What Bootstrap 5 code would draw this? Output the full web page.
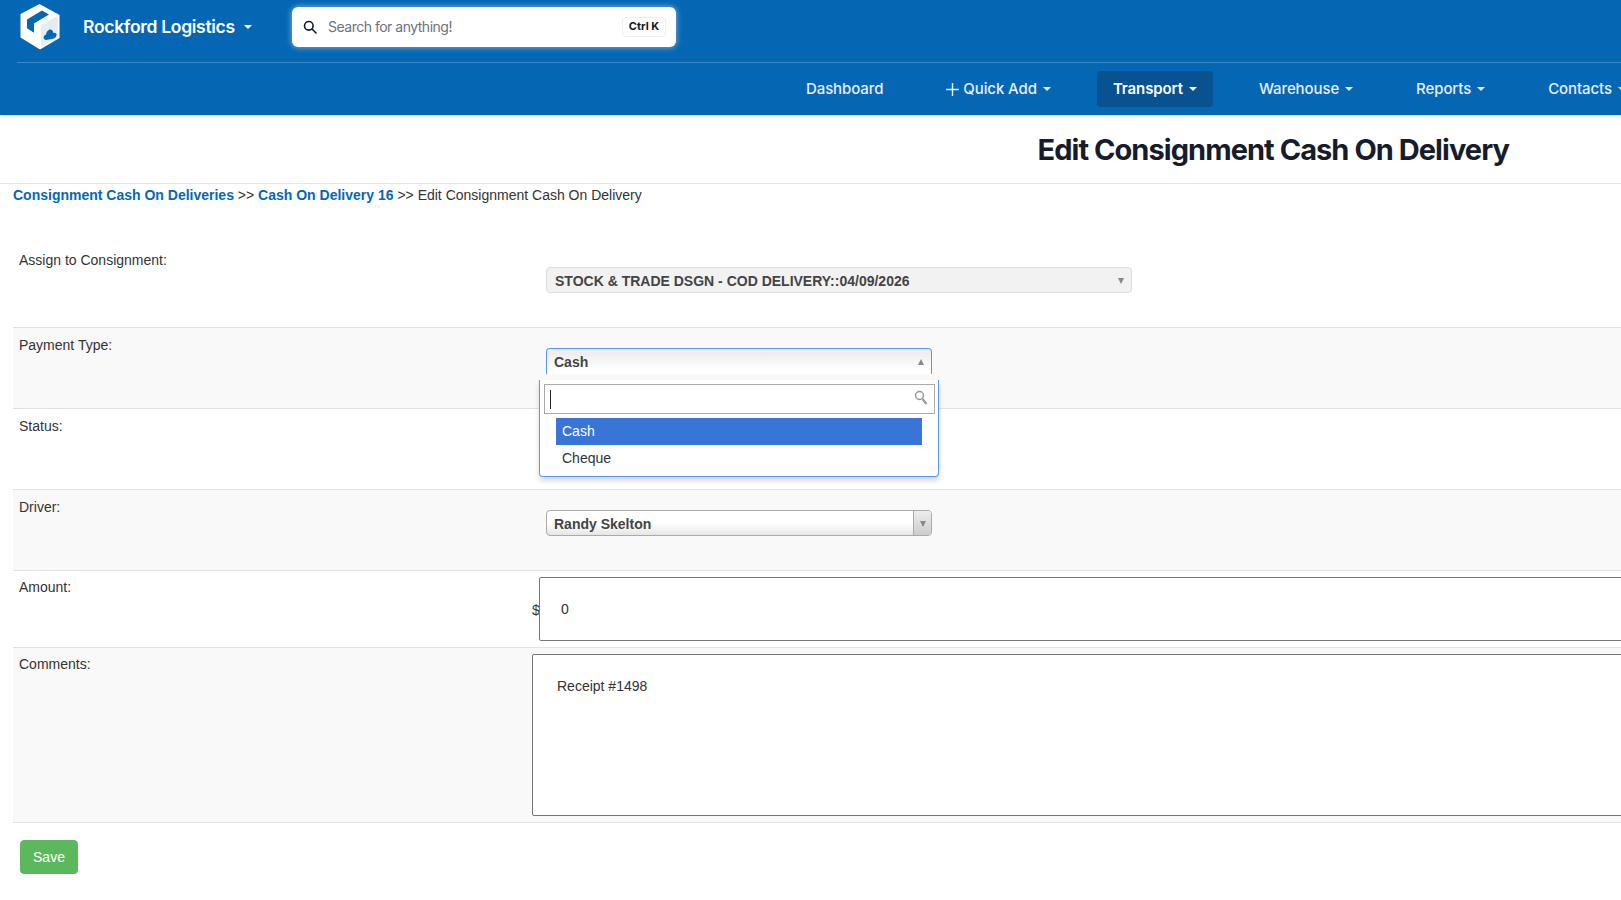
<!DOCTYPE html>
<html lang="en">

<head>
    <meta charset="UTF-8">
    <title>Edit Consignment Cash On Delivery</title>
    <link rel="stylesheet" href="https://cdn.jsdelivr.net/npm/bootstrap@5.3.0/dist/css/bootstrap.min.css">
    <style>
        html, body { overflow-x: hidden; }
        body { font-family: "Liberation Sans", Arial, sans-serif; font-size: 14px; color: #333; background: #fff; width: 1621px; }

        /* header */
        .top-head { background: #0567b3; height: 115px; font-family: Inter, sans-serif; box-shadow: 0 1px 3px rgba(0,0,0,.15); }
        .head-upper { height: 63px; margin-left: 17px; padding-left: 3px; border-bottom: 1px solid rgba(255,255,255,.22); }
        .head-logo { margin-top: -8px; }
        .brand-name { color: #fff; font-size: 17.5px; font-weight: 600; margin: -7px 0 0 23px; width: 151px; white-space: nowrap; letter-spacing: -.3px; }
        .caret-down { display: inline-block; width: 0; height: 0; border-left: 4px solid transparent; border-right: 4px solid transparent; border-top: 4px solid currentColor; }
        .brand-caret { color: #fff; margin-left: 10px; margin-top: -8px; }
        .search-box { width: 384px; height: 40px; margin-left: 40px; margin-top: -9px; background: #fff; border-radius: 6px; box-shadow: 0 0 6px rgba(255,255,255,.55); padding: 0 10px 0 11px; }
        .search-hint { color: #6b7280; font-size: 14px; margin-left: 11px; letter-spacing: -.5px; }
        .key-hint { height: 20px; width: 44px; border: 1px solid #eceef1; border-radius: 4px; color: #111827; font-size: 11px; font-weight: 700; }
        .main-links { margin-left: 789px; padding-top: 8px; gap: 29px; white-space: nowrap; }
        .main-link { color: #e6eff7; font-size: 15px; font-weight: 500; height: 36px; padding: 0 17px; border-radius: 4px; letter-spacing: -.1px; text-decoration: none; }
        .main-link:hover { color: #fff; }
        .main-link.on { background: #07528f; color: #fff; font-weight: 600; padding: 0 16px 0 16px; }
        .main-link .caret-down { margin-left: 6px; }
        .plus-sign { margin-right: 4px; }

        /* title */
        .title-bar { height: 69px; padding: 3px 112px 0 0; border-bottom: 1px solid #e5e5e5; }
        .title-bar h1 { font-family: Inter, sans-serif; font-size: 29px; font-weight: 700; color: #151c2c; letter-spacing: -.95px; margin: 0; }
        .crumbs { padding: 1px 0 0 13px; height: 59px; line-height: 20px; }
        .crumbs a { color: #0567b3; font-weight: 700; text-decoration: none; }

        /* form rows */
        .form-rows { margin-left: 13px; }
        .form-line { border-bottom: 1px solid #e2e2e2; }
        .form-line.alt { background: #f9f9f9; }
        .line-label { width: 520px; flex: none; padding: 7px 0 0 6px; line-height: 20px; }
        .line-field { position: relative; flex: 1; }
        .pick-box { display: flex; align-items: center; margin-left: 13px; height: 26px; padding: 2px 0 0 7px; border: 1px solid #aaa; border-radius: 4px; font-weight: 700; color: #444; background: linear-gradient(#fff 50%, #e6e6e6 100%); position: relative; }
        .pick-box.w-short { width: 385.5px; }
        .pick-box.w-long { width: 586px; }
        .pick-box.off { background: #f2f2f2; border-color: #ddd; padding-left: 8px; }
        .pick-box.open { border-color: #5897fb; border-bottom: 0; border-radius: 4px 4px 0 0; background: linear-gradient(#eee 20%, #fff 80%); }
        .pick-arrow { position: absolute; right: 7px; top: 10px; width: 0; height: 0; border-left: 3.5px solid transparent; border-right: 3.5px solid transparent; border-top: 6px solid #888; }
        .open .pick-arrow { border-top: 0; border-bottom: 6px solid #888; }
        .arrow-cell { position: absolute; right: 0; top: 0; bottom: 0; width: 18px; border-left: 1px solid #aaa; border-radius: 0 3px 3px 0; background: linear-gradient(#eee, #ccc); }
        .arrow-cell .pick-arrow { right: 5px; }
        .pick-wrap-a { padding: 24px 0 34px; }
        .pick-wrap-b { padding: 20px 0 34px; }
        .pick-wrap-c { height: 80px; }

        /* open dropdown */
        .pick-menu { position: absolute; left: 6px; top: 52px; width: 400px; height: 97px; background: #fff; border: 1px solid #5897fb; border-top: 0; border-radius: 0 0 4px 4px; box-shadow: 0 4px 5px rgba(0,0,0,.15); z-index: 5; padding: 4px 4px 0; }
        .menu-search { height: 30px; width: 391px; border: 1px solid #aaa; background: #fff; position: relative; }
        .menu-cursor { position: absolute; left: 5px; top: 5px; width: 1px; height: 19px; background: #222; }
        .menu-glass { position: absolute; right: 6px; top: 5px; }
        .menu-opts { padding: 4px 0 0 12px; margin: 0; list-style: none; width: 378px; }
        .menu-opts li { height: 27px; padding-left: 6px; line-height: 26px; color: #333; }
        .menu-opts li.hit { background: #3875d7; color: #fff; }

        .amount-field { padding: 6px 0; }
        .amount-sign { width: 7px; flex: none; line-height: 20px; margin: 23px 0 0 -1px; }
        .amount-input { display: block; width: 1300px; height: 64px; border: 1px solid #767676; border-radius: 2px; padding: 0 21px; color: #333; font-size: 14px; outline: 0; background: #fff; }
        .comment-field { padding: 6px 0; }
        .note-input { display: block; width: 1300px; height: 162px; margin-left: -1px; border: 1px solid #767676; border-radius: 2px; padding: 21px 24px; color: #333; font-size: 14px; line-height: 20px; outline: 0; background: #fff; resize: none; }
        .compact-line .line-label { padding-top: 6px; }
        .save-btn { background: #5cb85c; border: 1px solid #5cb85c; color: #fff; font-size: 14px; width: 58px; height: 34px; padding: 0; border-radius: 4px; margin: 17px 0 0 7px; }
    </style>
</head>

<body>
    <header class="top-head">
        <div class="head-upper d-flex align-items-center">
            <svg class="head-logo" width="40" height="46" viewBox="0 0 40 46" fill="none">
                <path d="M19.500 0 L39.500 11 V34 L20 45.500 L.5 33.500 V10 Z" fill="#fff"/>
                <path d="M21 21 L38 12 V33 L21 43 Z" fill="#e4edf6"/>
                <path d="M7 15.500 L22 6.500 L29 10.500 L14 19.500 V28.700 L7 24.300 Z" fill="#0567b3"/>
                <path d="M26 36 c-2.200 -.3 -3 -2.500 -1.800 -4.200 c.6 -.8 1.300 -1.100 1.800 -1.100 c.4 -3 2.800 -5.700 5.200 -5 c1.500 .5 2 2 2 3.200 c2.300 -.8 3.800 .6 3.300 2.700 c-.4 1.700 -1.800 2.700 -3.500 3.100 Z" fill="#0567b3"/>
            </svg>
            <span class="brand-name">Rockford Logistics</span>
            <span class="caret-down brand-caret"></span>
            <div class="search-box d-flex align-items-center">
                <svg width="14" height="14" viewBox="0 0 14 14" fill="none" stroke="#111827" stroke-width="1.600">
                    <circle cx="5.800" cy="5.800" r="4.300"/>
                    <path d="M9 9 L13 13" stroke-linecap="round"/>
                </svg>
                <span class="search-hint flex-grow-1">Search for anything!</span>
                <span class="key-hint d-flex align-items-center justify-content-center">Ctrl K</span>
            </div>
        </div>
        <nav class="main-links d-flex">
            <a class="main-link d-flex align-items-center" href="#">Dashboard</a>
            <a class="main-link d-flex align-items-center" href="#">
                <svg class="plus-sign" width="13" height="13" viewBox="0 0 13 13" stroke="#e6eff7" stroke-width="1.400"><path d="M6.500 0 V13 M0 6.500 H13"/></svg>
                Quick Add<span class="caret-down"></span>
            </a>
            <a class="main-link on d-flex align-items-center" href="#">Transport<span class="caret-down"></span></a>
            <a class="main-link d-flex align-items-center" href="#">Warehouse<span class="caret-down"></span></a>
            <a class="main-link d-flex align-items-center" href="#">Reports<span class="caret-down"></span></a>
            <a class="main-link d-flex align-items-center" href="#">Contacts<span class="caret-down"></span></a>
        </nav>
    </header>

    <div class="title-bar d-flex align-items-center justify-content-end">
        <h1>Edit Consignment Cash On Delivery</h1>
    </div>

    <div class="crumbs">
        <a href="#">Consignment Cash On Deliveries</a> &gt;&gt; <a href="#">Cash On Delivery 16</a> &gt;&gt; Edit Consignment Cash On Delivery
    </div>

    <form class="form-rows">
        <div class="form-line d-flex">
            <div class="line-label">Assign to Consignment:</div>
            <div class="line-field pick-wrap-a">
                <div class="pick-box w-long off">STOCK &amp; TRADE DSGN - COD DELIVERY::04/09/2026<span class="pick-arrow"></span></div>
            </div>
        </div>
        <div class="form-line alt d-flex">
            <div class="line-label">Payment Type:</div>
            <div class="line-field pick-wrap-b">
                <div class="pick-box w-short open">Cash<span class="pick-arrow"></span></div>
                <div class="pick-menu">
                    <div class="menu-search">
                        <span class="menu-cursor"></span>
                        <svg class="menu-glass" width="14" height="16" viewBox="0 0 14 16" fill="none" stroke="#999" stroke-width="1.500">
                            <circle cx="5.500" cy="5.500" r="4"/>
                            <path d="M8.500 9 L12.500 14" stroke-width="2.200"/>
                        </svg>
                    </div>
                    <ul class="menu-opts">
                        <li class="hit">Cash</li>
                        <li>Cheque</li>
                    </ul>
                </div>
            </div>
        </div>
        <div class="form-line d-flex">
            <div class="line-label">Status:</div>
            <div class="line-field pick-wrap-c"></div>
        </div>
        <div class="form-line alt d-flex">
            <div class="line-label">Driver:</div>
            <div class="line-field pick-wrap-b">
                <div class="pick-box w-short">Randy Skelton<span class="arrow-cell"><span class="pick-arrow"></span></span></div>
            </div>
        </div>
        <div class="form-line d-flex compact-line">
            <div class="line-label">Amount:</div>
            <div class="line-field d-flex amount-field">
                <span class="amount-sign">$</span>
                <input class="amount-input" type="text" value="0">
            </div>
        </div>
        <div class="form-line alt d-flex compact-line">
            <div class="line-label">Comments:</div>
            <div class="line-field comment-field">
                <textarea class="note-input">Receipt #1498</textarea>
            </div>
        </div>
        <button type="button" class="save-btn">Save</button>
    </form>

    <script src="https://cdn.jsdelivr.net/npm/bootstrap@5.3.0/dist/js/bootstrap.bundle.min.js"></script>
</body>

</html>
